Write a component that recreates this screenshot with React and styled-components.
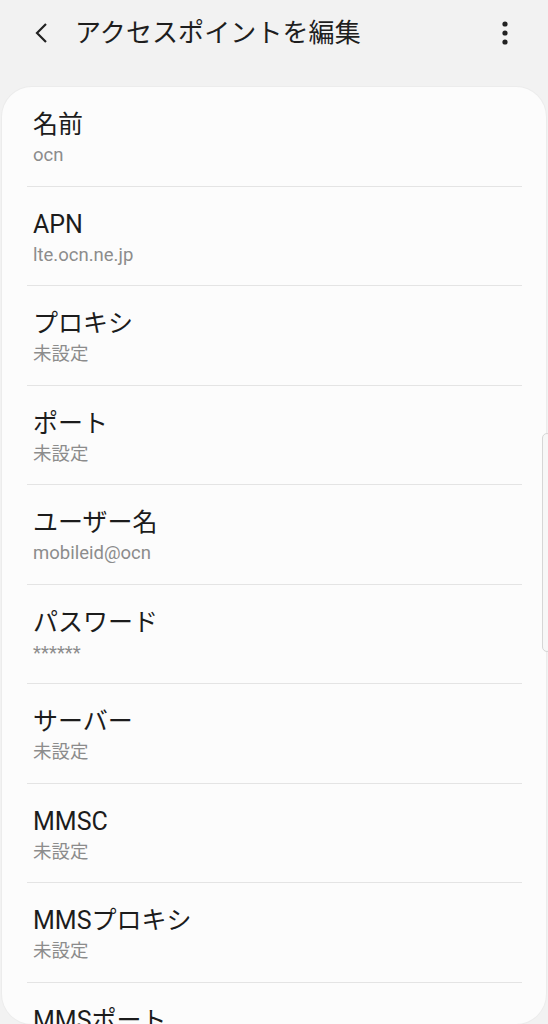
import styled, { createGlobalStyle } from "styled-components";

const Global = createGlobalStyle`
  html, body {
    margin: 0;
    padding: 0;
    background: #f2f2f2;
  }
  body {
    font-family: Roboto, "Noto Sans CJK JP", sans-serif;
  }
`

const Screen = styled.div`
  width: 548px;
  height: 1024px;
  display: flex;
  flex-direction: column;
  overflow: hidden;
  background: #f2f2f2;
  position: relative;
`
const Toolbar = styled.header`
  height: 87px;
  flex-shrink: 0;
  display: flex;
  align-items: flex-start;
  padding-top: 13px;
  box-sizing: border-box;
`
const IconButton = styled.button`
  border: none;
  background: none;
  padding: 0;
  width: ${(p) => p.w}px;
  height: 40px;
  display: flex;
  align-items: center;
  justify-content: center;
  margin-left: ${(p) => p.ml || 0}px;
  margin-right: ${(p) => p.mr || 0}px;
`
const Title = styled.h1`
  flex: 1;
  margin: 0 0 0 13px;
  font-size: 26px;
  font-weight: 400;
  line-height: 40px;
  color: #1e1e1e;
  letter-spacing: 0.1px;
`
const Card = styled.main`
  flex: 1;
  margin: 0 2px;
  background: #fcfcfc;
  border-radius: 30px;
  overflow: hidden;
  box-shadow: 0 0 0 1px #ececec;
`
const Row = styled.div`
  padding: 22px 24px 0 31px;
`
const Inner = styled.div`
  padding-bottom: 18.5px;
  border-bottom: ${(p) => (p.last ? "none" : "1px solid #e4e4e4")};
  margin-left: -6px;
  padding-left: 6px;
`
const Label = styled.div`
  font-size: 25px;
  line-height: 32px;
  color: #1c1c1c;
`
const Value = styled.div`
  margin-top: 2px;
  font-size: 18.5px;
  line-height: 24px;
  color: #8c8c8c;
`
const Scroll = styled.div`
  position: absolute;
  right: -4px;
  top: 433px;
  width: 8px;
  height: 217px;
  border: 1px solid #d6d6d6;
  border-radius: 6px;
  background: #f7f7f7;
`

const items = [
  ["名前", "ocn"],
  ["APN", "lte.ocn.ne.jp"],
  ["プロキシ", "未設定"],
  ["ポート", "未設定"],
  ["ユーザー名", "mobileid@ocn"],
  ["パスワード", "******"],
  ["サーバー", "未設定"],
  ["MMSC", "未設定"],
  ["MMSプロキシ", "未設定"],
  ["MMSポート", "未設定"],
]

export default function App() {
  return (
    <Screen>
      <Global />
      <Toolbar>
        <IconButton w={40} ml={22}>
          <svg width="16" height="24" viewBox="0 0 16 24">
            <path d="M12 3 L3 12 L12 21" fill="none" stroke="#222" strokeWidth="2.2" />
          </svg>
        </IconButton>
        <Title>アクセスポイントを編集</Title>
        <IconButton w={20} mr={33}>
          <svg width="8" height="26" viewBox="0 0 8 26">
            <circle cx="4" cy="4" r="2.6" fill="#222" />
            <circle cx="4" cy="13" r="2.6" fill="#222" />
            <circle cx="4" cy="22" r="2.6" fill="#222" />
          </svg>
        </IconButton>
      </Toolbar>
      <Card>
        {items.map(([label, value], i) => (
          <Row key={i}>
            <Inner last={i === items.length - 1}>
              <Label>{label}</Label>
              <Value>{value}</Value>
            </Inner>
          </Row>
        ))}
      </Card>
      <Scroll />
    </Screen>
  );
}
